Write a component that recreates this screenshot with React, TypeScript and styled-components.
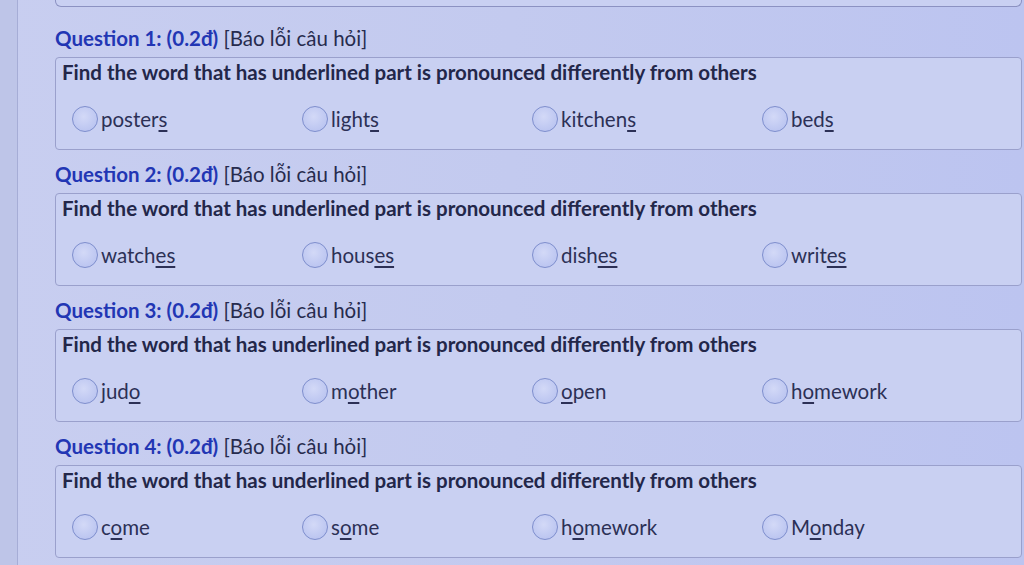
import React from "react";
import styled, { createGlobalStyle } from "styled-components";

const GlobalStyle = createGlobalStyle`
  html, body {
    margin: 0;
    padding: 0;
    background: #c1c8ee;
    font-family: "Lato", "Open Sans", sans-serif;
    overflow: hidden;
  }
`;

const Page = styled.div`
  width: 1024px;
  height: 565px;
  display: flex;
  background: linear-gradient(90deg, #c8cef0 0%, #c3caef 50%, #bcc4f0 100%);
`;

const Gutter = styled.div`
  width: 17px;
  flex-shrink: 0;
  background: #bec5e8;
  border-right: 1px solid #a6add6;
`;

const Content = styled.div`
  flex: 1;
  padding-left: 37px;
  display: flex;
  flex-direction: column;
`;

const PrevCard = styled.div`
  height: 6px;
  margin-right: 2px;
  margin-bottom: 7px;
  border: 1px solid #8c92c2;
  border-top: none;
  border-radius: 0 0 6px 6px;
  background: #c9d0f2;
`;

const Question = styled.section`
  display: flex;
  flex-direction: column;
  margin-top: 12px;
`;

const Title = styled.div`
  font-size: 20.5px;
  line-height: 24px;
  color: #272b4e;
  margin-bottom: 7px;
`;

const Points = styled.span`
  color: #2236b4;
  font-weight: 700;
`;

const Card = styled.div`
  height: 93px;
  box-sizing: border-box;
  margin-right: 2px;
  border: 1px solid #9aa0cc;
  border-radius: 4px;
  background: #c9d0f2;
  padding: 2px 0 0 6px;
  display: flex;
  flex-direction: column;
`;

const Prompt = styled.div`
  font-size: 20.5px;
  line-height: 24px;
  font-weight: 700;
  color: #23274a;
`;

const Options = styled.div`
  margin-top: 22px;
  display: grid;
  grid-template-columns: repeat(4, 230px);
  padding-left: 10px;
`;

const Option = styled.label`
  display: flex;
  align-items: center;
  font-size: 20.5px;
  line-height: 24px;
  color: #2c3056;
`;

const Radio = styled.span`
  width: 24px;
  height: 24px;
  border-radius: 50%;
  border: 1.5px solid #7e8ecd;
  background: radial-gradient(circle at 45% 40%, #d3d9f7 0%, #b3beee 100%);
  margin-right: 3px;
  flex-shrink: 0;
`;

const Under = styled.u`
  text-decoration-thickness: 1.5px;
  text-underline-offset: 3px;
`;

type Word = [string, string, string];

const questions: { n: number; options: Word[] }[] = [
  {
    n: 1,
    options: [
      ["poster", "s", ""],
      ["light", "s", ""],
      ["kitchen", "s", ""],
      ["bed", "s", ""],
    ],
  },
  {
    n: 2,
    options: [
      ["watch", "es", ""],
      ["hous", "es", ""],
      ["dish", "es", ""],
      ["writ", "es", ""],
    ],
  },
  {
    n: 3,
    options: [
      ["jud", "o", ""],
      ["m", "o", "ther"],
      ["", "o", "pen"],
      ["h", "o", "mework"],
    ],
  },
  {
    n: 4,
    options: [
      ["c", "o", "me"],
      ["s", "o", "me"],
      ["h", "o", "mework"],
      ["M", "o", "nday"],
    ],
  },
];

export default function App() {
  return (
    <>
      <GlobalStyle />
      <Page>
        <Gutter />
        <Content>
          <PrevCard />
          {questions.map((q) => (
            <Question key={q.n}>
              <Title>
                <Points>Question {q.n}: (0.2đ)</Points> [Báo lỗi câu hỏi]
              </Title>
              <Card>
                <Prompt>
                  Find the word that has underlined part is pronounced
                  differently from others
                </Prompt>
                <Options>
                  {q.options.map(([a, u, b], i) => (
                    <Option key={i}>
                      <Radio />
                      <span>
                        {a}
                        <Under>{u}</Under>
                        {b}
                      </span>
                    </Option>
                  ))}
                </Options>
              </Card>
            </Question>
          ))}
        </Content>
      </Page>
    </>
  );
}
